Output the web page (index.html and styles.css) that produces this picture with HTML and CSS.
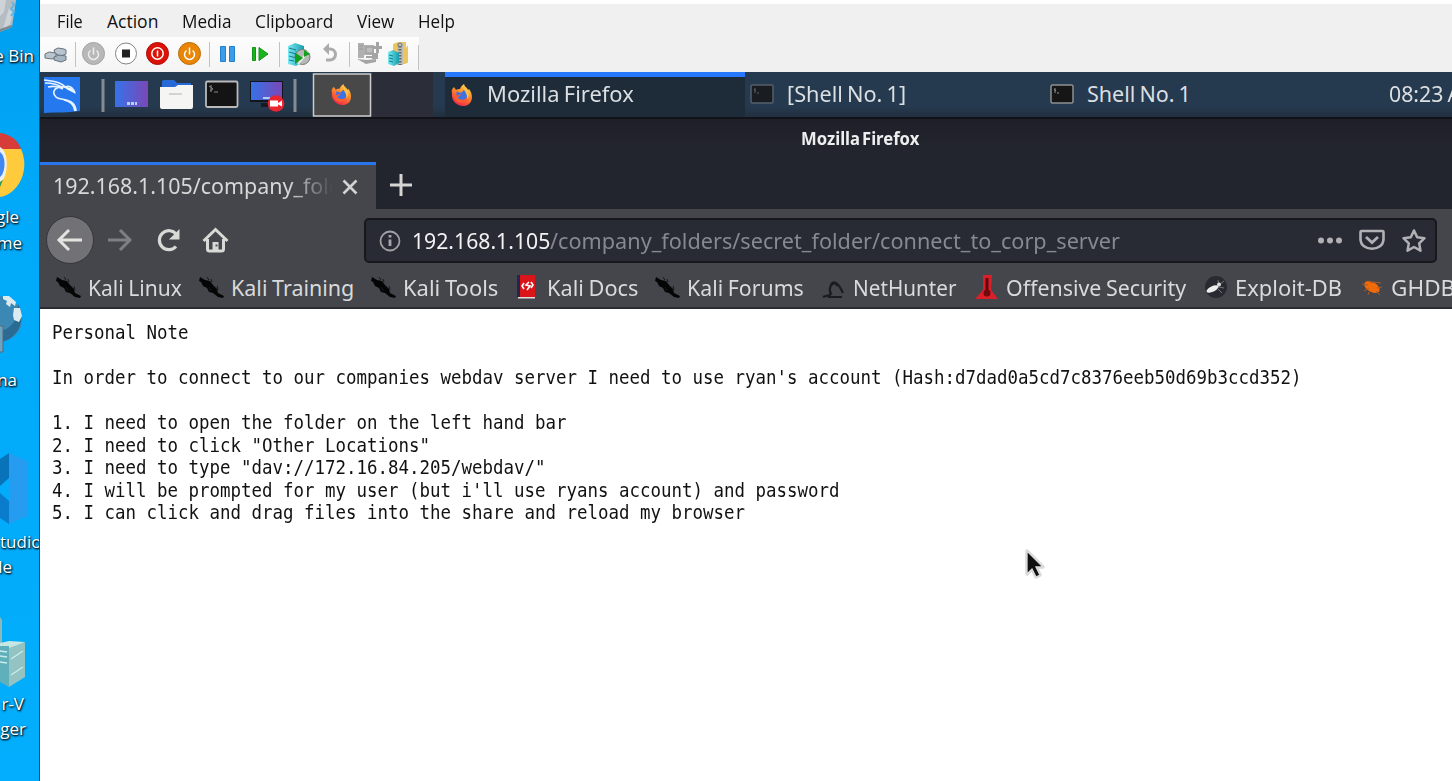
FILE: index.html
```html
<!DOCTYPE html>
<html lang="en">
<head>
<meta charset="utf-8">
<title>Mozilla Firefox</title>
<link rel="stylesheet" href="styles.css">
</head>
<body>
<svg width="0" height="0" class="defs" aria-hidden="true">
  <defs>
    <linearGradient id="flame" x1="0.8" y1="0" x2="0.3" y2="1"><stop offset="0" stop-color="#ffdc4a"/><stop offset=".45" stop-color="#ff8a2a"/><stop offset="1" stop-color="#f0204c"/></linearGradient>
    <linearGradient id="violet"><stop offset="0" stop-color="#3672e8"/><stop offset="1" stop-color="#7a48b8"/></linearGradient>
    <linearGradient id="server"><stop offset="0" stop-color="#7ceaf2"/><stop offset="1" stop-color="#159cac"/></linearGradient>
    <symbol id="firefox" viewBox="0 0 24 24">
      <path d="M2 10C1 7 3 5 4 4l2 3c1-1 3-1 4-1 1-3 3-4 4-5 0 3 3 3 4 6l1-1c5 6 4 17-6 17C7 23 1 18 2 10z" fill="url(#flame)"/>
      <path d="M7 8c1 2 3 1 4 2l3-3c4 1 6 9-1 11-5 0-8-5-6-10z" fill="#3d72e4"/>
      <path d="M4 12c3 1 5 0 7-1 0 2-3 2-3 4 3 3 7 2 9-1 0 5-5 7-9 5-3-1-4-4-4-7z" fill="#ff5b30"/>
      <path d="M14 1c0 3 5 5 5 10 0 2-1 4-2 5 1-7-5-8-3-15z" fill="#ffc044"/>
    </symbol>
    <symbol id="kali" viewBox="0 0 26 24">
      <path d="M1 2l5 3 5 1 3 4 4 4 1 4 6 3-1 2-5-1-5-4-4-1-2-4-4-2-2-4-2-1z" fill="#050505"/>
      <path d="M8 2l2 3M12 4l1 3M18 11l1 4M10 12l2 4" stroke="#17181b" stroke-width="1"/>
    </symbol>
    <symbol id="shell" viewBox="0 0 24 20">
      <rect x="1" y="1" width="22" height="18" rx="1.5" fill="#161616" stroke="currentColor" stroke-width="1.5"/>
      <path d="M4 5l2 2M5 4v5M7 9h2" stroke="currentColor" fill="none"/>
    </symbol>
  </defs>
</svg>
<div class="screen">
  <aside class="desktop">
    <svg class="d-icon bin" viewBox="0 0 18 34"><path d="M0 0h16l-4 27-12 5z" fill="#b5bdc3"/><path d="M0 0h6L4 12 0 16zM9 8l4 4-3 12-7 5z" fill="#cdd3d7"/><path d="M0 29l12-4v2L0 32z" fill="#7e878e"/><path d="M12 2l2 3-3 4 3 3-3 4" stroke="#62b4e4" stroke-width="2" fill="none"/></svg>
    <span class="d-label l1">e Bin</span>
    <svg class="d-icon chrome" viewBox="0 0 25 66"><path d="M0 1C10 2 18 8 21 17H0z" fill="#d83c38"/><path d="M0 17h21c10 22-4 46-21 48z" fill="#ffcb3c"/><path d="M0 15c9 4 9 31 0 35z" fill="#eee"/><path d="M0 20c6 4 6 20 0 25z" fill="#4286f0"/><path d="M0 50l3-2-3 7z" fill="#2b9d4c"/></svg>
    <span class="d-label l2">gle</span><span class="d-label l3">me</span>
    <svg class="d-icon globe" viewBox="0 0 24 58"><path d="M0 1c29 3 30 42 0 46z" fill="#3c88b4"/><path d="M0 36c12-2 18-12 18-27 9 17-1 36-18 38z" fill="#2a6b94"/><path d="M3 1l6 0 7 6-1 4-4-3-1 4-4-3 1-3-4-2zM14 13l6 0 2 8-3 6-5-2-1-5z" fill="#dcebf0"/><path d="M0 31h3v26H0" fill="#6aa4c4" stroke="#5c6870"/></svg>
    <span class="d-label l4">na</span>
    <svg class="d-icon code" viewBox="0 0 28 72"><path d="M9 0l18 8v55L9 71z" fill="#269cf0"/><path d="M9 0v25L0 33V6z" fill="#0873b9"/><path d="M0 40l9 8v23L0 65z" fill="#0a7ccb"/></svg>
    <span class="d-label l5">tudio</span><span class="d-label l6">le</span>
    <svg class="d-icon hyper" viewBox="0 0 27 74"><path d="M0 2l2 3v26H0z" fill="#8fb9b8"/><path d="M0 28l9-2 16 1-12 6H0z" fill="#c6e8e5"/><path d="M0 31h9v41L0 67z" fill="#5fb0bb"/><path d="M9 33l16-6v35L9 72z" fill="#93c3c2"/><path d="M0 36l7 1M0 41l7 1M0 47l7 1M11 44l12-8M11 60l12-8" stroke="#c9ecea" stroke-width="1.5"/></svg>
    <span class="d-label l7">r-V</span><span class="d-label l8">ger</span>
  </aside>

  <main class="vm">
    <nav class="menu">
      <span class="fit" data-w="26">File</span><span class="fit" data-w="51">Action</span><span class="fit" data-w="49">Media</span><span class="fit" data-w="78">Clipboard</span><span class="fit" data-w="37">View</span><span class="fit" data-w="37">Help</span>
    </nav>
    <div class="tools">
      <svg viewBox="0 0 379 35" width="379" height="35">
        <g stroke="#65727d" fill="#b8c5cf"><path d="M14 13l4-2 6 1 2 1v4l-5 2-6-2z"/><path d="M5 17l4-2 7 1v4l-4 2-7-1z"/><path d="M14 20l5-2 7 1v4l-5 2-7-2z" fill="#a7b5c1"/></g>
        <path d="M35.500 5v25M169.500 5v25M239.500 5v25M309.500 5v25M378.500 8v25" stroke="#c2c2c2"/>
        <circle cx="53.500" cy="16.500" r="11" fill="#b8b8b8" stroke="#a4a4a4"/><path d="M50.500 13.500a5 5 0 1 0 6 0M53.500 10.500v7" fill="none" stroke="#eee" stroke-width="1.500"/>
        <circle cx="86" cy="16.500" r="10.500" fill="#fff" stroke="#858585"/><path d="M82 12.500h8v8h-8z" fill="#222"/>
        <circle cx="117.500" cy="16.500" r="11" fill="#dc1208" stroke="#aa0c08"/><circle cx="117.500" cy="16.500" r="5.700" fill="none" stroke="#fff" stroke-width="1.500"/><path d="M117.500 13.500v6" stroke="#fff" stroke-width="1.500"/>
        <circle cx="149.500" cy="16.500" r="11" fill="#e98605" stroke="#ba6b0c"/><path d="M146.500 13.500a5 5 0 1 0 6 0M149.500 10.500v7" fill="none" stroke="#fff" stroke-width="1.500"/>
        <path d="M180.500 9.500h5v15h-5zM189.500 9.500h5v15h-5z" fill="#3b9ce9" stroke="#2580cb"/>
        <path d="M212.500 10.500h3v13h-3zM219 10.500v13l9-6.500z" fill="#19b51f" stroke="#159319"/>
        <path d="M248 9l7-3 9 3v15l-8 5-8-2z" fill="url(#server)"/><path d="M249 11l7 2M249 15l7 2M249 19l7 2M249 23l5 1" stroke="#137e8c"/><circle cx="262.500" cy="20" r="7.500" fill="#b5b8b7" stroke="#777"/><path d="M258 27l10-12" stroke="#e8e8e8" stroke-width="2"/><path d="M255 15.500l8 5.500-8 6zM264 13l6 4-6 3z" fill="#10a01c"/>
        <path d="M285 12h5a5.500 5.500 0 0 1 0 11h-4" fill="none" stroke="#ababab" stroke-width="3"/><path d="M283 12l6-6v12z" fill="#ababab"/>
        <g fill="#b0b0b0"><path d="M318 6h6v15h-6zM324 8h10v10h-10z"/><path d="M319 9h4M319 12h4M326 10h7v6h-7z" stroke="#989898" fill="#bdbdbd"/><path d="M326 19h8v2h-8zM317 22l10 1 9-1v3l-10 2zM332 16h6v6h-6zM333 9h3V5h3v4h3v3h-3v4h-3v-4h-3z" fill="#a4a4a4"/></g>
        <path d="M353 7l5-2h8v22h-13zM366 11l2-3v18h-2z" fill="#eac65c"/><path d="M357 6h6v22h-6z" fill="#bbb"/><path d="M360 9v19" stroke="#666" stroke-width="3" stroke-dasharray="1.500 1.500"/><circle cx="360" cy="8" r="2" fill="none" stroke="#777"/><path d="M348 15l5-2 6 3v10l-5 3-6-2z" fill="url(#server)"/><path d="M349 18l4 1M349 21l4 1M349 24l4 1" stroke="#137e8c"/>
      </svg>
    </div>

    <section class="panel">
      <svg class="launch" viewBox="0 0 393 47" width="393" height="47">
        <path d="M4 5h36v34c-12 2-24 1-36 2z" fill="#2578ee"/>
        <path d="M4 8c9 1 17 2 21 7 5-2 8 1 10 6M5 11c8 0 13 1 18 5M8 15c5-1 10-1 15 2M24 15c-9-1-13 5-8 10 4 4 19 0 20 14M24 28c6 1 10 5 11 11" fill="none" stroke="#e4f3ff" stroke-width="1.700"/><path d="M22 14l9 2 5 6-8-4z" fill="#eef8ff"/>
        <path d="M61.500 7h3v33h-3zM253.500 7h3v33h-3z" fill="#858b91"/>
        <path d="M75 9h33v26H75z" fill="url(#violet)"/><path d="M87 30h3v3h-3zM91 30h3v3h-3zM95 30h2v3h-2z" fill="#b4d2f8"/>
        <path d="M122 10q0-2 2-2h10l3 3h14v12h-29z" fill="#2869d8"/><path d="M120 15h15l3-2h15v22q0 2-2 2h-29q-2 0-2-2z" fill="#f5f5f3"/><path d="M129 22h13" stroke="#c7c7c7" stroke-width="1.500"/>
        <rect x="166" y="9.500" width="31.500" height="25.500" rx="1.500" fill="#141414" stroke="#bababa" stroke-width="1.800"/><path d="M169 14l4 3-3 2M171 13v7M174 20h4" stroke="#888" fill="none"/>
        <path d="M210 9h33v21h-33z" fill="#12151d"/><path d="M211 10h31v18h-31z" fill="url(#violet)"/><path d="M221 31h10v4h-10z" fill="#171a21"/><path d="M223 25h7v2h-7z" fill="#abcdf1"/><circle cx="236" cy="31.500" r="8.300" fill="#eb2530"/><path d="M230 28.500h8v6h-8zM238 31l4-2.500v6l-4-2z" fill="#fff"/>
        <path d="M332 0h61v46h-61z" fill="#2b2d39"/>
        <path d="M273.500 2h57v42h-57z" fill="#484848" stroke="#ccc" stroke-width="1.500"/>
        <use href="#firefox" x="290" y="11" width="23" height="23"/>
      </svg>
      <div class="task active"><svg width="24" height="24"><use href="#firefox"/></svg><span class="fit" data-w="147">Mozilla Firefox</span></div>
      <div class="task dim"><svg width="24" height="20"><use href="#shell"/></svg><span class="fit" data-w="119">[Shell No. 1]</span></div>
      <div class="task"><svg width="24" height="20"><use href="#shell"/></svg><span class="fit" data-w="104">Shell No. 1</span></div>
      <div class="clock"><span class="fit" data-w="91">08:23 AM</span></div>
    </section>

    <header class="titlebar"><span class="fit" data-w="118">Mozilla Firefox</span></header>
    <div class="tabs">
      <div class="tab"><div class="tab-name"><span class="fit" data-w="289">192.168.1.105/company_fold</span></div><svg width="16" height="16"><path d="M1.500 1.500l13 13M14.500 1.500l-13 13" stroke="#d2d2d0" stroke-width="2.600"/></svg></div>
      <svg class="plus" width="22" height="22"><path d="M11 0v22M0 11h22" stroke="#d5d5d3" stroke-width="3"/></svg>
    </div>
    <div class="nav">
      <svg width="200" height="56" viewBox="0 0 200 56">
        <circle cx="30" cy="31" r="23.500" fill="#727276" stroke="#35363b"/>
        <path d="M42 31H19M29 21L19 31l10 10" fill="none" stroke="#e3e3e1" stroke-width="3"/>
        <path d="M68 31h22M80 21l10 10-10 10" fill="none" stroke="#7e7f83" stroke-width="3"/>
        <path d="M136.500 25.500A9.500 9.500 0 1 0 136 37.500" fill="none" stroke="#d9d9d6" stroke-width="3.200"/><path d="M139.500 20v10.500H129z" fill="#d9d9d6"/>
        <path d="M163.500 32L175.500 20.500 187.500 32" fill="none" stroke="#d9d9d6" stroke-width="3"/><path d="M167.500 30v10q0 2 2 2h12q2 0 2-2V30" fill="none" stroke="#d9d9d6" stroke-width="3"/><path d="M172.500 42v-9h6v9z" fill="#d9d9d6"/><path d="M175.500 35.500h2v2h-2z" fill="#555"/>
      </svg>
      <div class="url">
        <svg width="22" height="22"><circle cx="11" cy="11" r="9.500" fill="none" stroke="#a0a1a5" stroke-width="1.800"/><path d="M11 9.500V16M11 5v2.500" stroke="#a5a6aa" stroke-width="2.800"/></svg>
        <span class="fit host" data-w="138">192.168.1.105</span><span class="fit path" data-w="570">/company_folders/secret_folder/connect_to_corp_server</span>
        <svg class="actions" width="110" height="26" viewBox="0 0 110 26">
          <g fill="#b1b1b5"><circle cx="4" cy="12.500" r="3"/><circle cx="13" cy="12.500" r="3"/><circle cx="22" cy="12.500" r="3"/></g>
          <path d="M44.500 3h21q1 0 1 1v7c0 13-23 13-23 0V4q0-1 1-1z" fill="none" stroke="#b1b1b5" stroke-width="2.600"/><path d="M49 9l6 5.500L61 9" fill="none" stroke="#b1b1b5" stroke-width="2.800"/>
          <path d="M97 2.500l3.200 6.700 7.300 1-5.300 5.200 1.300 7.300L97 19l-6.500 3.700 1.300-7.300-5.300-5.200 7.300-1z" fill="none" stroke="#b1b1b5" stroke-width="2.500" stroke-linejoin="round"/>
        </svg>
      </div>
    </div>
    <div class="bookmarks">
      <div class="mark"><svg><use href="#kali"/></svg><span class="fit" data-w="94">Kali Linux</span></div>
      <div class="mark"><svg><use href="#kali"/></svg><span class="fit" data-w="123">Kali Training</span></div>
      <div class="mark"><svg><use href="#kali"/></svg><span class="fit" data-w="95">Kali Tools</span></div>
      <div class="mark"><svg viewBox="0 0 26 24"><path d="M4 0h16v22H4z" fill="#d91519"/><path d="M2 0h3v22H2z" fill="#20264e"/><path d="M3 22h17v1.500H3z" fill="#ddd"/><path d="M9 8l-2 3 2 3M16 7l2 3-2 3M14 7l-3 3 4 1-3 4" stroke="#fff" stroke-width="1.600" fill="none"/></svg><span class="fit" data-w="91">Kali Docs</span></div>
      <div class="mark"><svg><use href="#kali"/></svg><span class="fit" data-w="117">Kali Forums</span></div>
      <div class="mark"><svg viewBox="0 0 26 24"><path d="M2 22c4-2 7-1 8-3-3-5 0-11 4-11s5 5 8 10M7 22h14" fill="none" stroke="#1b1c1f" stroke-width="2.200"/><path d="M10 10c2-3 5-3 7 1" stroke="#1b1c1f" stroke-width="3" fill="none"/></svg><span class="fit" data-w="104">NetHunter</span></div>
      <div class="mark"><svg viewBox="0 0 26 24"><path d="M9 0h9l-1 15 7 9H1l8-9z" fill="#d9202a"/><path d="M13 3v18" stroke="#64070d" stroke-width="3"/><circle cx="13" cy="18" r="3.500" fill="#71090d"/></svg><span class="fit" data-w="180">Offensive Security</span></div>
      <div class="mark"><svg viewBox="0 0 26 24"><circle cx="13" cy="12" r="11" fill="#292a31"/><ellipse cx="9.500" cy="14" rx="6.500" ry="2.800" transform="rotate(-25 9.500 14)" fill="#eee"/><path d="M16 11l-1-6M16 10l5-4M16 12l5 1M14 13l5 5" stroke="#888" stroke-width=".8"/><circle cx="16" cy="9.500" r="2" fill="#ddd"/></svg><span class="fit" data-w="107">Exploit-DB</span></div>
      <div class="mark"><svg viewBox="0 0 26 24"><ellipse cx="13" cy="12" rx="8.500" ry="5" transform="rotate(30 13 12)" fill="#f16a0a"/><path d="M3 9l6 1M5 16l5-3M10 17l-1 3M9 6l5 2M14 7l8 1M18 13l5-1M17 16l4 4" stroke="#a9592a" stroke-width="1"/></svg><span class="fit" data-w="64">GHDB</span></div>
    </div>
    <article class="page">
<pre>Personal Note

In order to connect to our companies webdav server I need to use ryan's account (Hash:d7dad0a5cd7c8376eeb50d69b3ccd352)

1. I need to open the folder on the left hand bar
2. I need to click "Other Locations"
3. I need to type "dav://172.16.84.205/webdav/"
4. I will be prompted for my user (but i'll use ryans account) and password
5. I can click and drag files into the share and reload my browser</pre>
    </article>
  </main>
  <svg class="cursor" viewBox="0 0 20 32"><path d="M2 2v23l5-5 4 8 4-2-4-8h7z" fill="#111" stroke="#aaa" stroke-width="3.500" stroke-linejoin="round" opacity=".45"/><path d="M2 2v23l5-5 4 8 4-2-4-8h7z" fill="#111" stroke="#ddd" stroke-width="1.300"/></svg>
</div>
<script src="fit.js"></script>
</body>
</html>
```
FILE: styles.css
```css
* { box-sizing: border-box; }
body { margin: 0; }
svg { display: block; flex: none; }
.defs { position: absolute; }
.screen { position: relative; display: flex; width: 1452px; height: 781px; overflow: hidden; font-family: "Noto Sans", sans-serif; }
.fit { display: inline-block; flex: none; white-space: nowrap; }
.fit > span { display: inline-block; transform-origin: 0 50%; }

.desktop { position: relative; flex: none; width: 40px; overflow: hidden; background: linear-gradient(#009fef, #02a9f9 25%, #02aefd); border-right: 1px solid #14507a; }
.d-icon { position: absolute; left: 0; }
.bin { top: 0; width: 18px; height: 34px; }
.chrome { top: 132px; width: 25px; height: 66px; }
.globe { top: 295px; width: 24px; height: 58px; }
.code { top: 453px; width: 28px; height: 72px; }
.hyper { top: 615px; width: 27px; height: 74px; }
.d-label { position: absolute; color: #fff; font: 17px/24px "Open Sans", sans-serif; white-space: nowrap; text-shadow: 1px 1px 2px #000, 0 1px 2px rgba(0,0,0,.7); }
.l1 { top: 44px; right: 5px; }
.l2 { top: 205px; right: 20px; }
.l3 { top: 231px; right: 17px; }
.l4 { top: 368px; right: 22px; }
.l5 { top: 530px; left: 0; }
.l6 { top: 555px; right: 27px; }
.l7 { top: 692px; right: 15px; }
.l8 { top: 717px; right: 13px; }

.vm { display: flex; flex-direction: column; width: 1412px; flex: none; overflow: hidden; background: #fff; }
.menu { display: flex; gap: 24px; height: 37px; padding: 4px 0 0 17px; border-top: 4px solid #fff; background: #f0f0f0; color: #111; font: 17.5px/26px "Open Sans", sans-serif; }
.tools { height: 35px; background: #f0f0f0; }
.tools svg { background: linear-gradient(#fdfdfd, #f4f4f4); }

.panel { display: flex; height: 47px; background: linear-gradient(#263a4f 75%, #22303f); border-bottom: 2px solid #111318; color: #dbdfe2; font-size: 21.5px; word-spacing: -1.5px; overflow: hidden; }
.launch { margin-right: 12px; }
.task { display: flex; align-items: center; flex: none; gap: 13px; width: 300px; padding: 0 0 1px 5px; color: #dbdfe2; }
.task .fit, .clock .fit { margin-top: -2px; }
.task svg { color: #8d9193; }
.dim svg { color: #606a73; opacity: .8; }
.active { background: #1e2c3a; border-top: 5px solid #2777ff; padding-bottom: 5px; }
.clock { display: flex; align-items: center; margin-left: 44px; }

.titlebar { height: 43px; padding-left: 761px; background: linear-gradient(#1e1f27, #23252e 60%); color: #eee; font-size: 17.5px; font-weight: 700; line-height: 39px; word-spacing: -2.5px; }
.tabs { display: flex; height: 47px; background: #23252e; color: #d7d8d8; font-size: 21.5px; }
.tab { display: flex; align-items: center; gap: 9px; width: 336px; height: 47px; padding: 0 0 1px 13px; background: #44464c; border-top: 3px solid #2875ec; }
.tab-name { width: 280px; margin-top: -3px; overflow: hidden; mask-image: linear-gradient(90deg, #000 84%, transparent); }
.plus { margin: 12px 0 0 14px; }
.nav { display: flex; height: 56px; background: #44464c; }
.url { display: flex; align-items: center; width: 1073px; height: 45px; margin: 9px 0 0 124px; padding-left: 13px; border: 2px solid #17181e; border-radius: 5px; background: #282a34; font-size: 21.5px; }
.host { margin-left: 11px; color: #f2f2f2; }
.path { color: #858a91; }
.actions { margin-left: 197px; }
.bookmarks { display: flex; gap: 17px; height: 44px; padding: 2px 0 0 16px; background: #44464c; border-bottom: 2px solid #2b2c31; color: #d8dadb; font-size: 21.5px; word-spacing: -1px; overflow: hidden; }
.mark { display: flex; align-items: center; flex: none; gap: 6px; }
.mark svg { width: 26px; height: 24px; }
.page { flex: 1; padding: 13px 12px; background: #fff; }
.page pre { margin: 0; color: #111; font: 18.6px/22.5px "DejaVu Sans Mono", monospace; transform: scaleX(.938); transform-origin: 0 0; }
.cursor { position: absolute; left: 1025px; top: 549px; width: 20px; height: 32px; }
```
FILE: fit.js
```js
// Set each label in the condensed width of its interface font.
document.querySelectorAll('.fit').forEach(label => {
  const width = Number(label.dataset.w);
  const inner = document.createElement('span');
  inner.textContent = label.textContent;
  label.replaceChildren(inner);
  const natural = inner.offsetWidth;
  label.style.width = width + 'px';
  inner.style.transform = `scaleX(${width / natural})`;
});
```
